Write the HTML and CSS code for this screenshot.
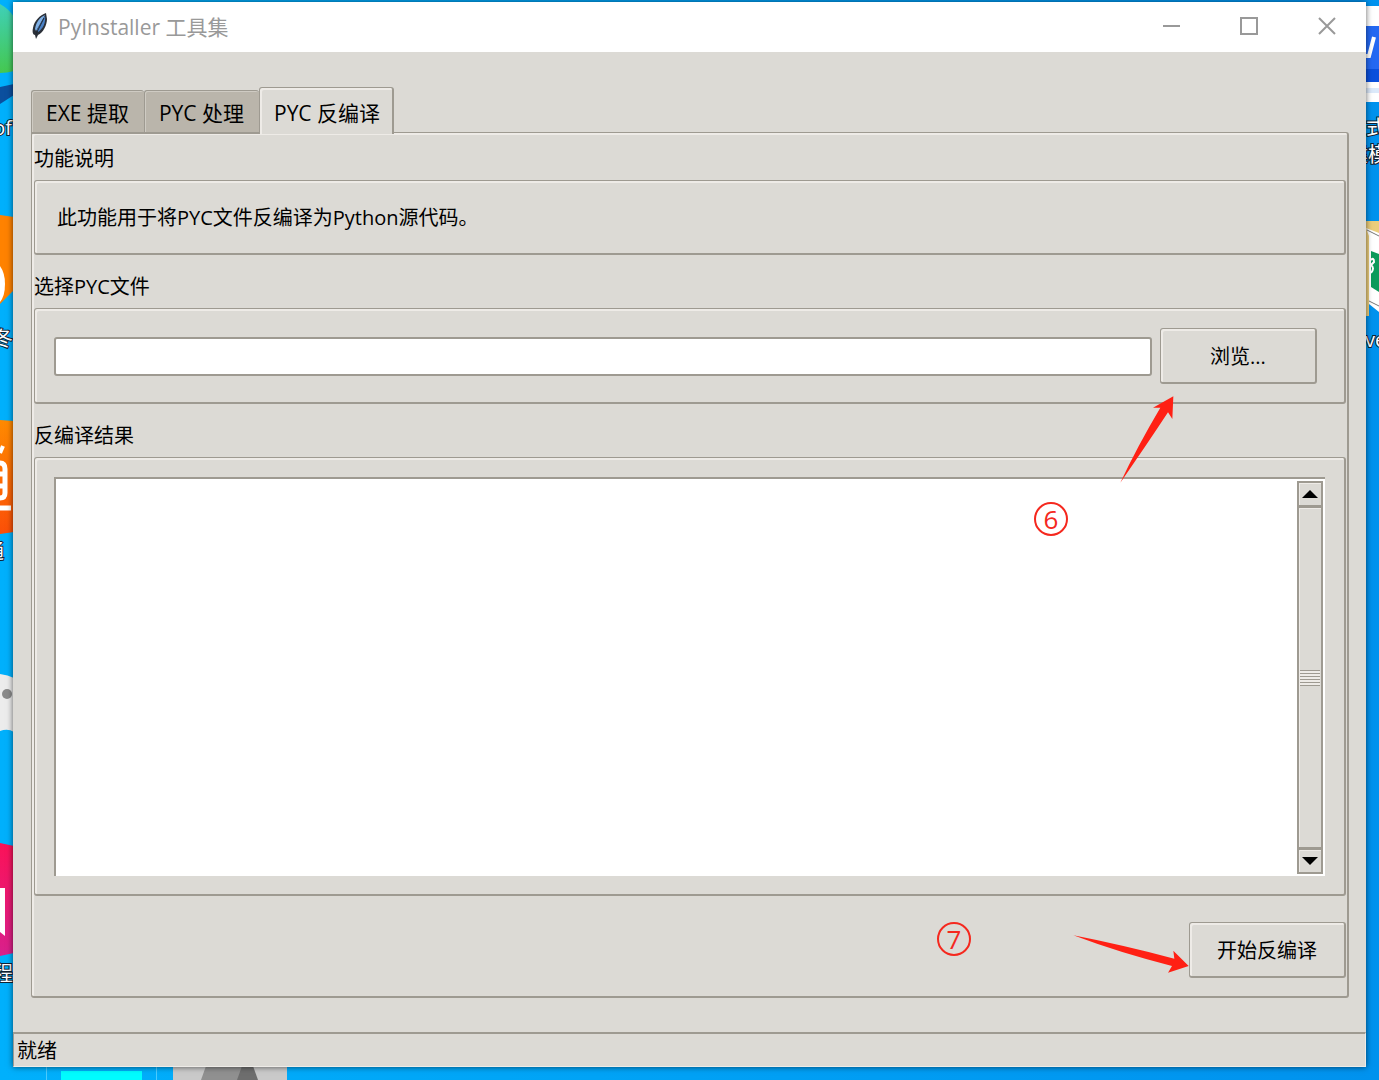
FILE: index.html
```html
<!DOCTYPE html>
<html lang="zh-CN">
<head>
  <meta charset="UTF-8" />
  <meta name="viewport" content="width=device-width, initial-scale=1.0" />
  <title>PyInstaller 工具集</title>
  <link rel="stylesheet" href="styles.css">
</head>
<body>

<!-- Desktop icons behind the window -->
<svg class="desktop desktop-left" width="30" height="1080" viewBox="0 0 30 1080" aria-hidden="true">
  <defs>
    <linearGradient id="ball" x1="0" y1="0" x2="0" y2="1">
      <stop offset="0" stop-color="#3fd0b8" />
      <stop offset="1" stop-color="#45c850" />
    </linearGradient>
    <linearGradient id="fire" x1="0" y1="0" x2="0" y2="1">
      <stop offset="0" stop-color="#ff8a00" />
      <stop offset="1" stop-color="#fb4f08" />
    </linearGradient>
    <linearGradient id="rose" x1="0" y1="0" x2="0" y2="1">
      <stop offset="0" stop-color="#fb1258" />
      <stop offset="1" stop-color="#d8208c" />
    </linearGradient>
  </defs>
  <path d="M0 4 Q9 9 14 17 V71 Q7 73 0 73 Z" fill="url(#ball)" />
  <path d="M0 87 L14 84 V95 L0 104 Z" fill="#0b4f9e" />
  <text x="12" y="135" text-anchor="end">of</text>
  <path d="M0 215 L14 217 V290 L0 304 Z" fill="#ff8200" />
  <path d="M0 266 Q5 273 5 284 Q5 296 0 302 Z" fill="#fff" />
  <text x="13" y="346" text-anchor="end">冬</text>
  <path d="M0 420 L14 421 V532 L0 534 Z" fill="url(#fire)" />
  <path d="M0 453 L3 446" fill="none" stroke="#fff" stroke-width="4" />
  <path d="M0 463 Q5 463 5 469 V493 Q5 498 0 498 M0 474 H5 M0 486 H5" fill="none" stroke="#fff" stroke-width="5" />
  <path d="M0 508 H11" stroke="#fff" stroke-width="5" />
  <text x="4" y="559" text-anchor="end">通</text>
  <path d="M0 674 Q8 675 14 678 V732 Q8 728 0 731 Z" fill="#ececec" />
  <circle cx="7" cy="694" r="5" fill="#8a8a8a" />
  <path d="M0 843 L14 846 V953 L0 956 Z" fill="url(#rose)" />
  <path d="M0 888 H5 V936 L0 932 Z" fill="#fff" />
  <text x="13" y="981" text-anchor="end">程</text>
</svg>

<svg class="desktop desktop-right" width="30" height="1080" viewBox="0 0 30 1080" aria-hidden="true">
  <rect x="17" y="6" width="13" height="96" fill="#fff" />
  <rect x="17" y="26" width="13" height="44" fill="#2468f2" />
  <rect x="17" y="69" width="13" height="13" fill="#0a4fdc" />
  <rect x="17" y="88" width="13" height="5" fill="#dce9fa" />
  <path d="M16 56 H20 L25 37" fill="none" stroke="#fff" stroke-width="4" />
  <text x="17" y="135">式</text>
  <text x="-1" y="162">建模</text>
  <path d="M17 221 H30 V240 L20 236 V316 H17 Z" fill="#ebcd7c" />
  <path d="M17 228 L30 233 V312 L20 304 V236 Z" fill="#fff" />
  <path d="M18 230 L30 236 M20 301 L30 306" stroke="#777" />
  <path d="M22 251 L30 254 V292 L22 287 Z" fill="#0c9b5b" />
  <path d="M22 260 Q25 257 25 262 L22 265 Q26 268 22 273" fill="none" stroke="#fff" stroke-width="2" />
  <text x="16" y="347">ve</text>
</svg>

<svg class="desktop desktop-bottom" width="300" height="14" viewBox="0 0 300 14" aria-hidden="true">
  <path d="M46.500 0 V14 M156.500 0 V14" stroke="#4ccbff" />
  <rect x="61" y="5" width="81" height="9" fill="#00fcff" />
  <rect x="173" y="0" width="114" height="14" fill="#c9c9c9" />
  <path d="M206 0 H244 L238 14 H201 Z" fill="#909090" />
  <path d="M242 0 H253 L258 14 H237 Z" fill="#6e6e6e" />
</svg>

<div class="window">
  <header class="titlebar">
    <svg class="feather" width="18" height="28" viewBox="0 0 18 28" aria-hidden="true">
      <path d="M15 0 C9 2 3 8 2 15 C1 19 2 22 4 22 L5 26 L7 22 C12 20 16 12 16 6 Z" fill="#2b3038" />
      <path d="M14 2 C9 4 5 9 4 16 L5 18 L13 4 Z" fill="#7fb0e6" />
      <path d="M14 3 C15 9 12 16 7 19 L6 17 Z" fill="#4a82c8" />
      <path d="M13 5 L5 21" stroke="#1d2836" fill="none" />
    </svg>
    <h1>PyInstaller 工具集</h1>
    <div class="window-controls">
      <button type="button" aria-label="最小化">
        <svg width="18" height="18" viewBox="0 0 18 18"><path d="M1 9 H18" /></svg>
      </button>
      <button type="button" aria-label="最大化">
        <svg width="18" height="18" viewBox="0 0 18 18"><path d="M1 1 H17 V17 H1 Z" /></svg>
      </button>
      <button type="button" aria-label="关闭">
        <svg width="18" height="18" viewBox="0 0 18 18"><path d="M1 1 L17 17 M17 1 L1 17" /></svg>
      </button>
    </div>
  </header>

  <main class="notebook">
    <div class="tabs" role="tablist">
      <button type="button" class="tab" role="tab" aria-selected="false">EXE 提取</button>
      <button type="button" class="tab" role="tab" aria-selected="false">PYC 处理</button>
      <button type="button" class="tab active" role="tab" aria-selected="true">PYC 反编译</button>
    </div>

    <div class="pane" role="tabpanel">
      <h2>功能说明</h2>
      <div class="frame">
        <p>此功能用于将PYC文件反编译为Python源代码。</p>
      </div>

      <h2><label for="pycFile">选择PYC文件</label></h2>
      <div class="frame file-row">
        <input type="text" id="pycFile" />
        <div class="callout">
          <button type="button" class="btn">浏览...</button>
          <span class="step step-browse">6</span>
          <svg class="arrow arrow-browse" width="54" height="87" viewBox="61 257 162 261" aria-hidden="true">
            <path d="M221 258 L160 292 L182 292 Q112 410 62 517 Q140 405 205 306 L218 326 Z" />
          </svg>
        </div>
      </div>

      <h2><label for="result">反编译结果</label></h2>
      <div class="frame result">
        <div class="text-box">
          <textarea id="result"></textarea>
          <div class="scrollbar">
            <button type="button" aria-label="向上滚动">
              <svg width="16" height="8" viewBox="0 0 16 8"><path d="M8 0 L16 8 H0 Z" /></svg>
            </button>
            <div class="thumb"><span class="grip"></span></div>
            <button type="button" aria-label="向下滚动">
              <svg width="16" height="8" viewBox="0 0 16 8"><path d="M0 0 H16 L8 8 Z" /></svg>
            </button>
          </div>
        </div>
      </div>

      <div class="actions">
        <div class="callout">
          <button type="button" class="btn">开始反编译</button>
          <span class="step step-start">7</span>
          <svg class="arrow arrow-start" width="116" height="38" viewBox="461 317 348 114" aria-hidden="true">
            <path d="M462 318 Q600 345 765 388 L762 364 L808 410 L746 430 L758 410 Q600 370 462 318 Z" />
          </svg>
        </div>
      </div>
    </div>
  </main>

  <footer class="statusbar">就绪</footer>
</div>

</body>
</html>
```
FILE: styles.css
```css
* {
  box-sizing: border-box;
}

body {
  margin: 0;
  padding: 2px 13px 13px;
  height: 100vh;
  position: relative;
  overflow: hidden;
  display: flex;
  background: linear-gradient(to right, #00b0fc, #0092ee);
  color: #000;
  font-family: "Open Sans", "Noto Sans CJK SC", sans-serif;
  font-size: 20px;
  line-height: 26px;
}

h1,
h2,
p {
  margin: 0;
  font-size: 20px;
  font-weight: normal;
}

button,
input,
textarea {
  font: inherit;
  color: inherit;
}

/* Desktop */
.desktop {
  position: absolute;
}

.desktop text {
  fill: #fff;
  stroke: #123;
  stroke-width: 2px;
  paint-order: stroke;
}

.desktop-left {
  top: 0;
  left: 0;
}

.desktop-right {
  top: 0;
  right: 0;
}

.desktop-bottom {
  bottom: 0;
  left: 0;
}

/* Window */
.window {
  position: relative;
  flex: 1;
  display: flex;
  flex-direction: column;
  background: #dcdad5;
  box-shadow: 0 0 6px rgba(0, 0, 0, 0.6);
}

.titlebar {
  display: flex;
  align-items: center;
  height: 50px;
  padding-left: 18px;
  background: #fff;
  color: #999;
}

.titlebar h1 {
  font-size: 21px;
}

.feather {
  margin-right: 9px;
}

.window-controls {
  display: flex;
  align-self: flex-start;
  margin-left: auto;
}

.window-controls button {
  display: flex;
  align-items: center;
  justify-content: center;
  width: 78px;
  height: 48px;
  padding: 0;
  border: 0;
  background: none;
}

.window-controls path {
  fill: none;
  stroke: #999;
  stroke-width: 2px;
}

/* Notebook */
.notebook {
  flex: 1;
  display: flex;
  flex-direction: column;
  padding: 35px 17px 35px 18px;
}

.tabs {
  position: relative;
  display: flex;
  align-items: flex-end;
  margin-bottom: -2px;
}

.tab {
  height: 44px;
  padding: 2px 15px 0 14px;
  border: 1px solid #9e9a91;
  border-right-width: 0;
  border-bottom-width: 2px;
  border-radius: 3px 3px 0 0;
  background: #bab5ab;
  box-shadow: inset 1px 1px #cfcbc3;
  font-size: 21px;
}

.tab.active {
  height: 47px;
  padding-top: 4px;
  padding-right: 12px;
  border-right-width: 2px;
  border-bottom: 0;
  background: #dcdad5;
  box-shadow: inset 2px 2px #eeebe7;
}

.pane,
.frame,
.btn {
  border: 1px solid #9e9a91;
  border-right-width: 2px;
  border-bottom-width: 2px;
  border-radius: 3px;
  box-shadow: inset 2px 2px #eeebe7;
}

.pane {
  flex: 1;
  display: flex;
  flex-direction: column;
  margin-bottom: -1px;
  padding: 13px 1px 18px 2px;
}

.pane h2 {
  margin-bottom: 8px;
}

.frame {
  margin-bottom: 19px;
  padding: 24px 22px 22px;
}

.file-row {
  display: flex;
  align-items: center;
  gap: 8px;
  padding: 19px 27px 18px 19px;
}

.file-row input {
  flex: 1;
  height: 39px;
  padding: 0 6px;
  border: 2px solid #9e9a91;
  border-radius: 3px;
  background: #fff;
  outline: none;
}

.btn {
  display: block;
  width: 157px;
  height: 56px;
  padding: 2px 0 0;
  background: #dcdad5;
}

.result {
  flex: 1;
  display: flex;
  margin-bottom: 26px;
  padding: 19px 19px 18px;
}

.text-box {
  flex: 1;
  display: flex;
  padding: 2px;
  border-top: 2px solid #9e9a91;
  border-left: 2px solid #9e9a91;
  background: #fff;
}

.text-box textarea {
  flex: 1;
  padding: 4px;
  border: 0;
  background: #fff;
  outline: none;
  resize: none;
}

.scrollbar {
  display: flex;
  flex-direction: column;
  width: 26px;
}

.scrollbar button,
.thumb {
  display: flex;
  align-items: center;
  justify-content: center;
  padding: 0;
  border: 2px solid #9e9a91;
  background: #dcdad5;
  box-shadow: inset 1px 1px #eeebe7;
}

.scrollbar button {
  height: 26px;
}

.thumb {
  flex: 1;
  border-top-width: 1px;
  border-bottom-width: 1px;
}

.grip {
  width: 20px;
  height: 16px;
  background: repeating-linear-gradient(#9e9a91 0 1px, #eeebe7 1px 3px);
}

.actions {
  display: flex;
  justify-content: flex-end;
}

/* Numbered callouts */
.callout {
  position: relative;
}

.step {
  position: absolute;
  width: 34px;
  height: 34px;
  border: 2px solid #f5281e;
  border-radius: 50%;
  color: #f5281e;
  font-size: 26px;
  font-weight: 500;
  line-height: 30px;
  text-align: center;
}

.step-browse {
  top: 174px;
  left: -126px;
}

.step-start {
  top: 0;
  left: -252px;
}

.arrow {
  position: absolute;
  fill: #ff2014;
}

.arrow-browse {
  top: 68px;
  left: -40px;
}

.arrow-start {
  top: 13px;
  left: -116px;
}

.statusbar {
  height: 35px;
  padding: 4px 3px 2px;
  border: 1px solid #eeebe7;
  border-top: 2px solid #9e9a91;
  border-left-color: #9e9a91;
}
```
